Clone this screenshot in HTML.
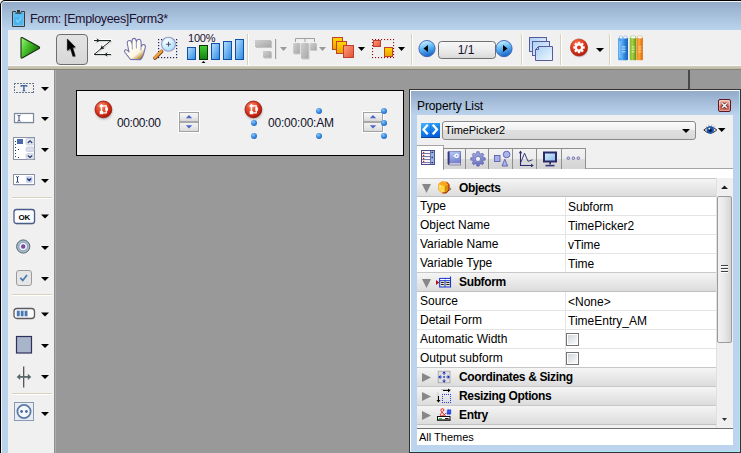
<!DOCTYPE html>
<html><head><meta charset="utf-8">
<style>
*{margin:0;padding:0;box-sizing:border-box}
html,body{width:741px;height:453px;overflow:hidden;background:#999;font-family:"Liberation Sans",sans-serif;position:relative}
.a{position:absolute}
svg{position:absolute;overflow:visible}
#wcorner{left:0;top:0;width:10px;height:10px;background:#fff}
#frame{left:0;top:0;width:741px;height:453px;background:#000;border-top-left-radius:5px}
#title{left:1px;top:1px;width:740px;height:29px;background:linear-gradient(#93abc9,#bbd4ed);border-top-left-radius:4px;border-top:1px solid #f4f6fa;border-left:1px solid #f0f4fa}
#lborder{left:1px;top:30px;width:7px;height:423px;background:#bbd2eb;border-left:1px solid #f0f4fa}
#ttext{left:30px;top:12px;font-size:12.5px;color:#1e1030;white-space:nowrap;letter-spacing:-0.35px}
#toolbar{left:8px;top:30px;width:733px;height:36px;background:#f0f0f0}
#tbline{left:8px;top:65px;width:733px;height:5px;background:linear-gradient(#f8f8f8 0,#f8f8f8 1px,#d2cdb9 1px,#bdb8a5 4px,#85837a 4px)}
#palette{left:8px;top:70px;width:46px;height:383px;background:#f0f0f0}
#palb{left:54px;top:70px;width:2px;height:383px;background:linear-gradient(90deg,#8e8e8e 50%,#adadad 50%)}
#canvas{left:56px;top:70px;width:685px;height:383px;background:#999}
#vline{left:688px;top:70px;width:2px;height:19px;background:#484848}
.sep{width:2px;height:31px;top:34px;border-left:1px solid #d6d2bd;border-right:1px solid #fff}
.hsep{left:12px;width:40px;height:2px;border-top:1px solid #d6d2bd;border-bottom:1px solid #fff}
.dd{width:0;height:0;border-left:4px solid transparent;border-right:4px solid transparent;border-top:4px solid #000}
#form{left:76px;top:90px;width:328px;height:66px;background:#f0f0f0;border:1px solid #000}
.ftxt{font-size:12px;color:#10102a;white-space:nowrap}
.handle{width:6px;height:6px;border-radius:50%;background:radial-gradient(circle at 38% 32%,#8cc8fa 0,#3a8ae0 45%,#1050b0 100%)}
#panel{left:409px;top:89px;width:332px;height:364px;background:#333}
#ptitle{left:410px;top:90px;width:330px;height:362px;border-right:1px solid #a8e8f8;border-bottom:1px solid #a8e8f8;background:linear-gradient(#93abc9 0,#bad2ec 24px,#bcd4ed);border-left:1px solid #fff;border-top:1px solid #fff}
#pttext{left:417px;top:99px;letter-spacing:-0.1px;font-size:12px;color:#000;white-space:nowrap}
#pcontent{left:417px;top:115px;width:316px;height:330px;background:#f0f0f0}
.row{left:417px;width:299px;height:19px;background:#fff;border-bottom:1px solid #e4e4e4;font-size:12px;line-height:18px;color:#000}
.row .k{position:absolute;left:3px;top:0;white-space:nowrap}
.row .v{position:absolute;left:151px;top:1px;white-space:nowrap}
.row .dv{position:absolute;left:148px;top:0;width:1px;height:18px;background:#e4e4e4}
.hdr{left:417px;width:299px;height:19px;background:linear-gradient(#f5f5f5,#dcdcdc);border-top:1px solid #c8c8c8;border-bottom:1px solid #c0c0c0;font-size:12px;line-height:18px;font-weight:bold;color:#000}
.hdr .t{position:absolute;left:42px;top:0;white-space:nowrap;letter-spacing:-0.35px}
.cb{width:13px;height:13px;border:1px solid #747474;background:linear-gradient(135deg,#cdd2da,#f6f6f6 80%);box-shadow:inset 0 0 0 1px #fff}
.tab{top:148px;height:21px;width:23px;border:1px solid #8e8e8e;border-bottom:none;background:linear-gradient(#f2f2f2,#ececec 50%,#dcdcdc 50%,#d4d4d4)}
</style></head><body>
<div id="wcorner" class="a"></div>
<div id="frame" class="a"></div>
<div id="title" class="a"></div>
<div id="lborder" class="a"></div>
<!-- clipboard icon -->
<svg style="left:12px;top:10px" width="13" height="17" viewBox="0 0 13 17">
  <rect x="1.5" y="2.5" width="10" height="13" fill="#4ab6ef"/>
  <path d="M4 1.5 H0.5 V16.5 H12.5 V1.5 H9" fill="none" stroke="#3a3a3a" stroke-width="1"/>
  <rect x="5" y="0" width="3" height="2.5" fill="#333"/>
  <rect x="3.5" y="2.5" width="6" height="1.2" fill="#333"/>
  <path d="M4 10 L6 12 L9.5 7.5" fill="none" stroke="#8fd2fa" stroke-width="1.2"/>
  <rect x="1.5" y="4" width="10" height="3" fill="#6cc6f6" opacity="0.5"/>
</svg>
<div id="ttext" class="a">Form: [Employees]Form3*</div>
<div id="toolbar" class="a"></div>
<div id="tbline" class="a"></div>
<div id="palette" class="a"></div>
<div id="palb" class="a"></div>
<div id="canvas" class="a"></div>
<div id="vline" class="a"></div>

<!-- ===== TOOLBAR ICONS ===== -->
<!-- play -->
<svg style="left:19px;top:36px" width="22" height="24" viewBox="0 0 22 24">
  <defs><linearGradient id="gplay" x1="0" y1="0" x2="1" y2="0.6"><stop offset="0" stop-color="#a0fa80"/><stop offset="0.45" stop-color="#48c02a"/><stop offset="1" stop-color="#107008"/></linearGradient></defs>
  <path d="M2 2.6 Q2 0.9 3.6 1.8 L20 10.8 Q21.2 11.7 20 12.6 L3.6 21.8 Q2 22.7 2 21 Z" fill="url(#gplay)" stroke="#1a3010" stroke-width="1.1"/>
</svg>
<!-- selected arrow button -->
<div class="a" style="left:56px;top:34px;width:32px;height:31px;border:1px solid #6f6f6f;border-radius:4px;background:linear-gradient(#e2e2e2,#dedede 50%,#d6d6d6)"></div>
<svg style="left:66px;top:38px" width="14" height="21" viewBox="0 0 14 21">
  <defs><filter id="shd" x="-50%" y="-50%" width="200%" height="200%"><feGaussianBlur stdDeviation="0.7"/></filter></defs>
  <path d="M1.3 0.9 L1.3 12.5 L4.3 10 L6.9 18.4 L9 17.6 L6.5 9.6 L9.2 9 Z" fill="#000" opacity="0.35" transform="translate(1 1.2)" filter="url(#shd)"/>
  <path d="M1.3 0.9 L1.3 12.5 L4.3 10 L6.9 18.4 L9 17.6 L6.5 9.6 L9.2 9 Z" fill="#000" stroke="#000" stroke-width="0.5" stroke-linejoin="round"/>
</svg>
<!-- Z icon -->
<svg style="left:92px;top:37px" width="22" height="23" viewBox="0 0 22 23">
  <g fill="none" stroke="#ffffff" stroke-width="3" stroke-linejoin="round" opacity="0.85">
    <path d="M2 3.5 H19 L2 17.5 H19"/>
  </g>
  <g fill="none" stroke="#c8c8c8" stroke-width="1" opacity="0.7">
    <path d="M3 4.5 H20 L3 18.5 H20"/>
  </g>
  <g fill="none" stroke="#1c2626" stroke-width="1">
    <path d="M2 3.5 H19 L2 17.5 H19"/>
  </g>
  <g fill="#1c2626">
    <path d="M4.3 1.2 L8.2 3.5 L4.3 5.8 L5.6 3.5 Z"/>
    <path d="M15.8 15.2 L11.9 17.5 L15.8 19.8 L14.5 17.5 Z"/>
    <path d="M8.1 12.4 L12.3 11.5 L11 10 L9.7 8.4 Z"/>
  </g>
</svg>
<!-- hand -->
<svg style="left:121px;top:35px" width="28" height="28" viewBox="0 0 28 28">
  <defs><linearGradient id="ghand" x1="0.25" y1="0.3" x2="0.75" y2="1"><stop offset="0" stop-color="#fffff4"/><stop offset="0.62" stop-color="#fdf8e8"/><stop offset="0.86" stop-color="#cfa860"/><stop offset="1" stop-color="#8a6020"/></linearGradient></defs>
  <path d="M9.5 24.5 L4 17.5 Q3 15.5 4.5 14.8 Q6 14.5 8 17 L6.3 8.5 Q6 5.5 8.5 5.5 Q10.6 5.5 11 8.5 L11 6.2 Q11.4 3.4 13 3.4 Q15 3.4 15.2 6.2 L15.4 6.8 Q16 4.3 17.8 4.3 Q20 4.5 20.1 7 L20.2 11.5 Q21.3 9.2 23 9.6 Q24.8 10.2 24.3 12.6 L22.6 19 Q21.6 22.6 19.5 24.6 Z" fill="url(#ghand)" stroke="#7472ac" stroke-width="1.1" stroke-linejoin="round"/>
  <path d="M11 8.5 L11.4 14.5 M15.3 7 L15.4 13.5 M20.2 11.5 L19.8 15.5" stroke="#8a86b8" stroke-width="0.9" fill="none"/>
</svg>
<!-- zoom -->
<svg style="left:153px;top:37px" width="26" height="24" viewBox="0 0 26 24">
  <defs><radialGradient id="glens" cx="0.35" cy="0.3" r="0.75"><stop offset="0" stop-color="#ffffff"/><stop offset="0.4" stop-color="#d8f4ff"/><stop offset="1" stop-color="#a8d8f8"/></radialGradient></defs>
  <g fill="#202060"><rect x="5" y="2" width="1.2" height="1.2"/><rect x="5" y="20" width="1.2" height="1.2"/><rect x="8" y="2" width="1.2" height="1.2"/><rect x="8" y="20" width="1.2" height="1.2"/><rect x="11" y="2" width="1.2" height="1.2"/><rect x="11" y="20" width="1.2" height="1.2"/><rect x="14" y="2" width="1.2" height="1.2"/><rect x="14" y="20" width="1.2" height="1.2"/><rect x="17" y="2" width="1.2" height="1.2"/><rect x="17" y="20" width="1.2" height="1.2"/><rect x="20" y="2" width="1.2" height="1.2"/><rect x="20" y="20" width="1.2" height="1.2"/><rect x="23" y="2" width="1.2" height="1.2"/><rect x="23" y="20" width="1.2" height="1.2"/><rect x="5" y="5" width="1.2" height="1.2"/><rect x="23" y="5" width="1.2" height="1.2"/><rect x="5" y="8" width="1.2" height="1.2"/><rect x="23" y="8" width="1.2" height="1.2"/><rect x="5" y="11" width="1.2" height="1.2"/><rect x="23" y="11" width="1.2" height="1.2"/><rect x="5" y="14" width="1.2" height="1.2"/><rect x="23" y="14" width="1.2" height="1.2"/><rect x="5" y="17" width="1.2" height="1.2"/><rect x="23" y="17" width="1.2" height="1.2"/></g>
  <path d="M2 21 L8.5 14.5" stroke="#704010" stroke-width="3.8" stroke-linecap="round"/>
  <path d="M1.8 20.6 L8.3 14.1" stroke="#f0a040" stroke-width="2.6" stroke-linecap="round"/>
  <circle cx="15.5" cy="7.2" r="7" fill="url(#glens)" stroke="#9898c8" stroke-width="1.1"/>
  <path d="M15.5 4.8 V9.6 M13.1 7.2 H17.9" stroke="#505070" stroke-width="1.1"/>
</svg>
<!-- 100% -->
<div class="a" style="left:188px;top:32px;font-size:11px;color:#1a1030;letter-spacing:-0.2px;white-space:nowrap">100%</div>
<svg style="left:186px;top:38px" width="60" height="27" viewBox="0 0 60 27">
  <defs>
    <linearGradient id="gbar" x1="0" y1="0" x2="1" y2="1"><stop offset="0" stop-color="#b8e0ff"/><stop offset="1" stop-color="#2a8ae0"/></linearGradient>
    <linearGradient id="ggrn" x1="0" y1="0" x2="0" y2="1"><stop offset="0" stop-color="#40d030"/><stop offset="1" stop-color="#108010"/></linearGradient>
  </defs>
  <rect x="1.5" y="9.5" width="8" height="12" fill="url(#gbar)" stroke="#1050a8" stroke-width="1"/>
  <rect x="13.5" y="7.5" width="8" height="14" fill="url(#ggrn)" stroke="#103010" stroke-width="1"/>
  <rect x="25.5" y="5.5" width="8" height="16" fill="url(#gbar)" stroke="#1050a8" stroke-width="1"/>
  <rect x="37.5" y="3.5" width="8" height="18" fill="url(#gbar)" stroke="#1050a8" stroke-width="1"/>
  <rect x="49.5" y="1.5" width="8" height="20" fill="url(#gbar)" stroke="#1050a8" stroke-width="1"/>
  <path d="M15.5 25 L17.5 23 L19.5 25 Z" fill="#000"/>
</svg>
<div class="a sep" style="left:247px"></div>
<!-- align (disabled) -->
<svg style="left:254px;top:38px" width="36" height="22" viewBox="0 0 36 22">
  <defs><linearGradient id="gdis" x1="0" y1="0" x2="1" y2="1"><stop offset="0" stop-color="#d0d0d0"/><stop offset="1" stop-color="#a8a8a8"/></linearGradient>
  <filter id="dshd" x="-30%" y="-30%" width="160%" height="160%"><feGaussianBlur stdDeviation="0.6"/></filter></defs>
  <rect x="2" y="3" width="16" height="7" fill="#000" opacity="0.18" filter="url(#dshd)"/>
  <rect x="10" y="14" width="8" height="6.5" fill="#000" opacity="0.18" filter="url(#dshd)"/>
  <rect x="1" y="2" width="16" height="7" fill="url(#gdis)"/>
  <rect x="9" y="13" width="8" height="6.5" fill="url(#gdis)"/>
  <rect x="21" y="1" width="1.2" height="20" fill="#a0a0a0"/>
  <path d="M26 9 L33 9 L29.5 13 Z" fill="#9a9a9a"/>
</svg>
<svg style="left:292px;top:37px" width="36" height="23" viewBox="0 0 36 23">
  <path d="M3.5 5 V1.5 H22.5 V5 M13 1.5 V5" fill="none" stroke="#a0a0a0" stroke-width="1"/>
  <rect x="2" y="7" width="6.5" height="10.5" fill="#000" opacity="0.15" filter="url(#dshd)"/>
  <rect x="10" y="7" width="7.5" height="15.5" fill="#000" opacity="0.15" filter="url(#dshd)"/>
  <rect x="18.5" y="7" width="6.5" height="7" fill="#000" opacity="0.15" filter="url(#dshd)"/>
  <rect x="1.2" y="6" width="6.5" height="10.5" fill="url(#gdis)"/>
  <rect x="9" y="6" width="7.5" height="15.5" fill="url(#gdis)"/>
  <rect x="18" y="6" width="6.5" height="7" fill="url(#gdis)"/>
  <path d="M27 10 L34 10 L30.5 14 Z" fill="#9a9a9a"/>
</svg>
<!-- stacked squares -->
<svg style="left:331px;top:36px" width="36" height="23" viewBox="0 0 36 23">
  <defs>
    <linearGradient id="gy" x1="0" y1="0" x2="0" y2="1"><stop offset="0" stop-color="#ffd800"/><stop offset="1" stop-color="#e8a000"/></linearGradient>
    <linearGradient id="gr" x1="0" y1="0" x2="1" y2="1"><stop offset="0" stop-color="#ffa080"/><stop offset="1" stop-color="#e05030"/></linearGradient>
  </defs>
  <rect x="1.5" y="1.5" width="10" height="12" fill="url(#gy)" stroke="#c04030" stroke-width="1"/>
  <rect x="5.5" y="5.5" width="10" height="12" fill="url(#gy)" stroke="#c04030" stroke-width="1"/>
  <rect x="12.5" y="9.5" width="10" height="12" fill="url(#gr)" stroke="#c04030" stroke-width="1"/>
  <path d="M27 11 L34 11 L30.5 15 Z" fill="#000"/>
</svg>
<!-- dotted arrange -->
<svg style="left:371px;top:38px" width="36" height="21" viewBox="0 0 36 21">
  <g fill="#980808"><rect x="1" y="1" width="1.1" height="1.1"/><rect x="1" y="4" width="1.1" height="1.1"/><rect x="1" y="7" width="1.1" height="1.1"/><rect x="1" y="10" width="1.1" height="1.1"/><rect x="1" y="13" width="1.1" height="1.1"/><rect x="1" y="16" width="1.1" height="1.1"/><rect x="1" y="19" width="1.1" height="1.1"/><rect x="4" y="1" width="1.1" height="1.1"/><rect x="4" y="19" width="1.1" height="1.1"/><rect x="7" y="1" width="1.1" height="1.1"/><rect x="7" y="19" width="1.1" height="1.1"/><rect x="10" y="1" width="1.1" height="1.1"/><rect x="10" y="19" width="1.1" height="1.1"/><rect x="13" y="1" width="1.1" height="1.1"/><rect x="13" y="19" width="1.1" height="1.1"/><rect x="16" y="1" width="1.1" height="1.1"/><rect x="16" y="19" width="1.1" height="1.1"/><rect x="19" y="1" width="1.1" height="1.1"/><rect x="19" y="19" width="1.1" height="1.1"/><rect x="22" y="1" width="1.1" height="1.1"/><rect x="22" y="4" width="1.1" height="1.1"/><rect x="22" y="7" width="1.1" height="1.1"/><rect x="22" y="10" width="1.1" height="1.1"/><rect x="22" y="13" width="1.1" height="1.1"/><rect x="22" y="16" width="1.1" height="1.1"/><rect x="22" y="19" width="1.1" height="1.1"/></g>
  <rect x="2.5" y="2.5" width="7" height="6" fill="url(#gr)" stroke="#c04030" stroke-width="1"/>
  <rect x="13.5" y="9.5" width="8" height="9" fill="url(#gy)" stroke="#c04030" stroke-width="1"/>
  <path d="M27 9 L34 9 L30.5 13 Z" fill="#000"/>
</svg>
<div class="a sep" style="left:411px"></div>
<!-- nav -->
<svg style="left:418px;top:40px" width="96" height="19" viewBox="0 0 96 19">
  <defs>
    <linearGradient id="gcirc" x1="0.3" y1="0" x2="0.6" y2="1"><stop offset="0" stop-color="#d8f6ff"/><stop offset="0.45" stop-color="#60b8f4"/><stop offset="1" stop-color="#1460c4"/></linearGradient>
    <linearGradient id="gbox" x1="0" y1="0" x2="0" y2="1"><stop offset="0" stop-color="#f8f8f8"/><stop offset="0.5" stop-color="#ececec"/><stop offset="1" stop-color="#d8d8d8"/></linearGradient>
  </defs>
  <circle cx="9" cy="8.6" r="8.1" fill="url(#gcirc)" stroke="#3a5cb0" stroke-width="0.9"/>
  <path d="M5.5 8.5 L10 5 L10 12 Z" fill="#000"/>
  <rect x="20.5" y="1.5" width="57" height="17" rx="3" fill="url(#gbox)" stroke="#707070" stroke-width="1"/>
  <circle cx="86" cy="8.6" r="8.1" fill="url(#gcirc)" stroke="#3a5cb0" stroke-width="0.9"/>
  <path d="M89.5 8.5 L85 5 L85 12 Z" fill="#000"/>
</svg>
<div class="a" style="left:456px;top:43px;width:20px;text-align:center;font-size:12px;color:#1a1030">1/1</div>
<div class="a sep" style="left:521px"></div>
<!-- windows icon -->
<svg style="left:528px;top:36px" width="26" height="26" viewBox="0 0 26 26">
  <defs><linearGradient id="gwin" x1="0" y1="0" x2="1" y2="1"><stop offset="0" stop-color="#a8d0f4"/><stop offset="1" stop-color="#f0f8ff"/></linearGradient></defs>
  <rect x="1.5" y="1.5" width="17" height="14" fill="url(#gwin)" stroke="#5a5a9a" stroke-width="1"/>
  <rect x="4.5" y="5.5" width="17" height="14" fill="url(#gwin)" stroke="#5a5a9a" stroke-width="1"/>
  <path d="M10.5 10.5 H24.5 V24.5 H7.5 V13.5 Z" fill="url(#gwin)" stroke="#5a5a9a" stroke-width="1"/>
  <path d="M7.5 13.5 H10.5 V10.5" fill="none" stroke="#5a5a9a" stroke-width="1"/>
</svg>
<div class="a sep" style="left:560px"></div>
<!-- red gear -->
<svg style="left:569px;top:38px" width="20" height="20" viewBox="0 0 20 20">
  <defs><radialGradient id="gred" cx="0.4" cy="0.3" r="0.8"><stop offset="0" stop-color="#ff7a50"/><stop offset="0.5" stop-color="#e03818"/><stop offset="1" stop-color="#a01006"/></radialGradient></defs>
  <ellipse cx="10.5" cy="11" rx="8.8" ry="8.5" fill="#000" opacity="0.15"/>
  <circle cx="10" cy="9.5" r="8.6" fill="url(#gred)" stroke="#a01808" stroke-width="0.5"/>
  <g fill="#fff">
    <circle cx="10" cy="9.5" r="4.2"/>
    <rect x="8.8" y="3.8" width="2.4" height="11.4"/>
    <rect x="4.3" y="8.3" width="11.4" height="2.4"/>
    <rect x="8.8" y="3.8" width="2.4" height="11.4" transform="rotate(45 10 9.5)"/>
    <rect x="8.8" y="3.8" width="2.4" height="11.4" transform="rotate(-45 10 9.5)"/>
  </g>
  <circle cx="10" cy="9.5" r="2" fill="#e03018"/>
</svg>
<div class="a dd" style="left:596px;top:48px"></div>
<div class="a sep" style="left:609px"></div>
<!-- books -->
<svg style="left:617px;top:35px" width="28" height="27" viewBox="0 0 28 27">
  <defs>
    <linearGradient id="gb1" x1="0" y1="0" x2="1" y2="0"><stop offset="0" stop-color="#3a90e8"/><stop offset="0.35" stop-color="#5ab0f8"/><stop offset="0.7" stop-color="#2a80d8"/><stop offset="1" stop-color="#1a60b8"/></linearGradient>
    <linearGradient id="gb2" x1="0" y1="0" x2="1" y2="0"><stop offset="0" stop-color="#80b828"/><stop offset="0.4" stop-color="#a8d048"/><stop offset="1" stop-color="#5a9010"/></linearGradient>
    <linearGradient id="gb3" x1="0" y1="0" x2="1" y2="0"><stop offset="0" stop-color="#f08010"/><stop offset="0.4" stop-color="#ffa838"/><stop offset="1" stop-color="#d86000"/></linearGradient>
  </defs>
  <path d="M1.2 4 Q1.2 2.5 2.5 2.5 H9.8 Q11 2.5 11 4 V24 Q11 25.2 9.8 25.2 H2.5 Q1.2 25.2 1.2 24 Z" fill="url(#gb1)"/>
  <rect x="12.8" y="2.5" width="6.5" height="22.7" rx="0.8" fill="url(#gb2)"/>
  <rect x="19.6" y="2.5" width="6.2" height="22.7" rx="0.8" fill="url(#gb3)"/>
  <path d="M2.5 1 H5 V2.5 H7 V1 H9.8 V3.5 H2.5 Z" fill="#fff" stroke="#7aa8d8" stroke-width="0.5"/>
  <path d="M13.8 1 H18.5 V3.5 H13.8 Z" fill="#fff" stroke="#90b860" stroke-width="0.5"/>
  <path d="M20.5 1 H25 V3.5 H20.5 Z" fill="#fff" stroke="#e0a060" stroke-width="0.5"/>
  <rect x="2" y="6" width="1.5" height="17" fill="#a8d8ff" opacity="0.6"/>
  <g fill="#d8ecff" opacity="0.6"><rect x="5" y="11" width="3.5" height="1.5"/><rect x="5" y="13.5" width="3.5" height="1.5"/><rect x="5" y="16" width="3.5" height="1.5"/></g>
  <g fill="#eaffc8" opacity="0.55"><rect x="14.8" y="11" width="2.8" height="1.5"/><rect x="14.8" y="13.5" width="2.8" height="1.5"/><rect x="14.8" y="16" width="2.8" height="1.5"/></g>
  <g fill="#ffe8c0" opacity="0.55"><rect x="21.5" y="11" width="2.8" height="1.5"/><rect x="21.5" y="13.5" width="2.8" height="1.5"/><rect x="21.5" y="16" width="2.8" height="1.5"/></g>
</svg>

<!-- ===== PALETTE ===== -->
<svg style="left:13px;top:81px" width="40" height="345" viewBox="0 0 40 345">
  <!-- text label dashed T -->
  <g fill="#6a7890"><rect x="1" y="2" width="2" height="1"/><rect x="4" y="2" width="2" height="1"/><rect x="7" y="2" width="2" height="1"/><rect x="10" y="2" width="2" height="1"/><rect x="13" y="2" width="2" height="1"/><rect x="16" y="2" width="2" height="1"/><rect x="19" y="2" width="2" height="1"/><rect x="3" y="11" width="2" height="1"/><rect x="6" y="11" width="2" height="1"/><rect x="9" y="11" width="2" height="1"/><rect x="12" y="11" width="2" height="1"/><rect x="15" y="11" width="2" height="1"/><rect x="18" y="11" width="2" height="1"/><rect x="1" y="11" width="1" height="1"/><rect x="1" y="2" width="1" height="2"/><rect x="1" y="5" width="1" height="2"/><rect x="1" y="8" width="1" height="2"/><rect x="20" y="4" width="1" height="2"/><rect x="20" y="7" width="1" height="2"/><rect x="20" y="10" width="1" height="2"/></g>
  <path d="M8 4.7 H13.8" stroke="#3a5a98" stroke-width="1.3"/>
  <path d="M8 4.2 V6 M13.8 4.2 V6" stroke="#3a5a98" stroke-width="0.9"/>
  <path d="M10.9 5 V9.8" stroke="#3a5a98" stroke-width="1.4"/>
  <path d="M9.6 9.8 H12.2" stroke="#3a5a98" stroke-width="1"/>
  <path d="M28 6 L36 6 L32 10 Z" fill="#000"/>
  <!-- input -->
  <rect x="1.5" y="33.5" width="19.5" height="9" fill="#000" opacity="0.15"/>
  <rect x="1.5" y="32.5" width="19" height="9" fill="#fff" stroke="#7a8898" stroke-width="1.2"/>
  <path d="M4.5 34.2 Q6 34.2 6 35.5 V38.8 Q6 40.2 4.5 40.2 M7.5 34.2 Q6 34.2 6 35.5 M7.5 40.2 Q6 40.2 6 38.8" stroke="#3a4a90" stroke-width="1" fill="none"/>
  <path d="M28 36 L36 36 L32 40 Z" fill="#000"/>
  <!-- list -->
  <rect x="1" y="57" width="21" height="22" fill="#9aa0b0" opacity="0.35"/>
  <rect x="0.5" y="56.5" width="21" height="22" fill="#fff" stroke="#8a90a8" stroke-width="1"/>
  <rect x="4" y="58" width="6" height="5" fill="#4a6aa8"/>
  <g fill="#3a3a50"><rect x="2" y="60" width="1" height="1"/><rect x="2" y="63" width="1" height="1"/><rect x="2" y="66" width="1" height="1"/><rect x="2" y="69" width="1" height="1"/><rect x="2" y="72" width="1" height="1"/><rect x="2" y="75" width="1" height="1"/><rect x="5" y="68" width="1" height="1"/><rect x="5" y="76" width="1" height="1"/></g>
  <rect x="13" y="57.5" width="8" height="6.5" rx="1.5" fill="#e2e6f0" stroke="#c4cad8" stroke-width="0.8"/>
  <rect x="13" y="66" width="8" height="4.5" rx="1.5" fill="#d8dcec" stroke="#c4cad8" stroke-width="0.8"/>
  <rect x="13" y="72.5" width="8" height="5.5" rx="1.5" fill="#e2e6f0" stroke="#c4cad8" stroke-width="0.8"/>
  <path d="M14.8 62 L17 59.8 L19.2 62" stroke="#2a3a70" stroke-width="1.2" fill="none"/>
  <path d="M14.8 74.5 L17 76.5 L19.2 74.5" stroke="#2a3a70" stroke-width="1.2" fill="none"/>
  <path d="M28 67 L36 67 L32 71 Z" fill="#000"/>
  <!-- combo -->
  <rect x="1" y="94" width="20" height="11" fill="#9aa0b0" opacity="0.3"/>
  <rect x="0.5" y="93.5" width="21" height="10" fill="#fff" stroke="#8a90a8" stroke-width="1"/>
  <path d="M3.2 95.5 Q4.5 95.5 4.5 97 V100 Q4.5 101.5 3.2 101.5 M5.8 95.5 Q4.5 95.5 4.5 97 M5.8 101.5 Q4.5 101.5 4.5 100" stroke="#203070" stroke-width="0.9" fill="none"/>
  <rect x="13" y="95.2" width="6.5" height="6.5" rx="1" fill="#c4d0ec"/>
  <path d="M14.3 97.5 L16.25 99.5 L18.2 97.5" stroke="#203070" stroke-width="1.3" fill="none"/>
  <path d="M28 98 L36 98 L32 102 Z" fill="#000"/>
  <!-- OK button -->
  <rect x="1.8" y="129.5" width="20.5" height="14" rx="2.5" fill="#000" opacity="0.12"/>
  <rect x="1" y="128.5" width="20.5" height="14" rx="2.5" fill="#fdfdff" stroke="#4a5c88" stroke-width="1.3"/>
  <text x="11.2" y="138.8" font-size="8" font-weight="bold" text-anchor="middle" fill="#000" font-family="Liberation Sans" letter-spacing="-0.3">OK</text>
  <path d="M28 133.5 L36 133.5 L32 137.5 Z" fill="#000"/>
  <!-- radio -->
  <circle cx="10.2" cy="165.5" r="6.6" fill="#a8bccc" stroke="#4a5a6a" stroke-width="0.9"/>
  <circle cx="10.2" cy="165.5" r="4.3" fill="#eef2f8" stroke="#7a90a8" stroke-width="0.8"/>
  <circle cx="10.2" cy="165.5" r="2.2" fill="#7a4a98"/>
  <path d="M28 165 L36 165 L32 169 Z" fill="#000"/>
  <!-- checkbox -->
  <rect x="3.5" y="189.5" width="15" height="15" rx="2.5" fill="#e6e6e6" stroke="#9a9a9a" stroke-width="1"/>
  <path d="M7.3 196.8 L9.8 199.4 L14 194" stroke="#4a78b4" stroke-width="1.7" fill="none"/>
  <path d="M28 196 L36 196 L32 200 Z" fill="#000"/>
  <!-- progress -->
  <rect x="1" y="227.5" width="20.5" height="10" rx="3" fill="#fbfbfb" stroke="#5a5a60" stroke-width="1.3"/>
  <rect x="3.8" y="229.7" width="2.9" height="5.6" fill="#4a78b4"/>
  <rect x="7.7" y="229.7" width="2.9" height="5.6" fill="#4a78b4"/>
  <rect x="11.6" y="229.7" width="2.9" height="5.6" fill="#4a78b4"/>
  <path d="M28 231.5 L36 231.5 L32 235.5 Z" fill="#000"/>
  <!-- rectangle -->
  <rect x="3.5" y="255.5" width="15" height="16.5" fill="#a8b4c8" stroke="#303060" stroke-width="1.2"/>
  <path d="M28 263 L36 263 L32 267 Z" fill="#000"/>
  <!-- splitter -->
  <path d="M10.7 285.5 V306.5" stroke="#484848" stroke-width="1.2"/>
  <path d="M6.5 295 H15.5 V296.8 H6.5 Z" fill="#5a6a6a"/>
  <path d="M3.7 295.9 L7.2 292.8 V299 Z M18.3 295.9 L14.8 292.8 V299 Z" fill="#5a6a6a"/>
  <path d="M28 294 L36 294 L32 298 Z" fill="#000"/>
  <!-- plugin -->
  <rect x="2" y="322" width="19" height="18" fill="#000" opacity="0.15"/>
  <rect x="1.5" y="321.5" width="19" height="18" fill="#e8ecf4" stroke="#8a98b0" stroke-width="1"/>
  <circle cx="11" cy="330.5" r="6.6" fill="#f4f6fa" stroke="#5a7aa8" stroke-width="1.8"/>
  <circle cx="8.6" cy="330.5" r="1.4" fill="#4a6a98"/>
  <circle cx="13.4" cy="330.5" r="1.4" fill="#4a6a98"/>
  <path d="M28 331 L36 331 L32 335 Z" fill="#000"/>
</svg>
<div class="a hsep" style="top:197px"></div>
<div class="a hsep" style="top:294px"></div>
<div class="a hsep" style="top:393px"></div>

<!-- ===== FORM ===== -->
<div id="form" class="a"></div>
<svg style="left:94px;top:100px" width="19" height="19" viewBox="0 0 19 19">
  <defs><radialGradient id="gred2" cx="0.4" cy="0.35" r="0.75"><stop offset="0" stop-color="#f87a58"/><stop offset="0.55" stop-color="#d8341a"/><stop offset="1" stop-color="#980c04"/></radialGradient><filter id="rshd" x="-30%" y="-30%" width="160%" height="160%"><feGaussianBlur stdDeviation="0.9"/></filter></defs>
  <ellipse cx="9.8" cy="11.2" rx="8.6" ry="8.4" fill="#000" opacity="0.22" filter="url(#rshd)"/>
  <circle cx="9.4" cy="9.4" r="8.4" fill="url(#gred2)" stroke="#8a0c04" stroke-width="0.7"/>
  <ellipse cx="8.2" cy="5.5" rx="5" ry="3" fill="#fff" opacity="0.12"/>
  <g fill="#fff">
    <path d="M7.4 3.8 L9.6 6 L7.4 8.2 L5.2 6 Z"/>
    <rect x="6.7" y="7.6" width="1.5" height="4"/>
    <rect x="5.7" y="11" width="3.4" height="3.2"/>
    <rect x="11.3" y="7.4" width="2.6" height="3.4"/>
  </g>
  <path d="M9 5.9 H12.3 V12.9 H9" stroke="#fff" stroke-width="1.2" fill="none"/>
</svg>
<div class="a ftxt" style="left:117px;top:116px;letter-spacing:-0.4px">00:00:00</div>
<!-- spinner 1 -->
<div class="a" style="left:178px;top:111px;width:22px;height:22px;background:#fff"></div>
<div class="a" style="left:179px;top:112px;width:20px;height:20px;border:1px solid #a2a2a2;background:#a8a8a8"></div>
<div class="a" style="left:180px;top:113px;width:18px;height:8px;background:linear-gradient(#f6f6f6,#e8e8e8 60%,#d8d8d8)"></div>
<div class="a" style="left:180px;top:123px;width:18px;height:8px;background:linear-gradient(#f2f2f2,#e6e6e6 60%,#dadada)"></div>
<svg style="left:185px;top:114px" width="8" height="16" viewBox="0 0 8 16"><path d="M0.8 4.2 L4 1 L7.2 4.2 Z M0.8 11.2 L4 14.4 L7.2 11.2 Z" fill="#4a64c8"/></svg>
<div class="handle a" style="left:251px;top:108px"></div>
<svg style="left:244px;top:100px" width="19" height="19" viewBox="0 0 19 19">
  <ellipse cx="9.8" cy="11.2" rx="8.6" ry="8.4" fill="#000" opacity="0.22" filter="url(#rshd)"/>
  <circle cx="9.4" cy="9.4" r="8.4" fill="url(#gred2)" stroke="#8a0c04" stroke-width="0.7"/>
  <ellipse cx="8.2" cy="5.5" rx="5" ry="3" fill="#fff" opacity="0.12"/>
  <g fill="#fff">
    <path d="M7.4 3.8 L9.6 6 L7.4 8.2 L5.2 6 Z"/>
    <rect x="6.7" y="7.6" width="1.5" height="4"/>
    <rect x="5.7" y="11" width="3.4" height="3.2"/>
    <rect x="11.3" y="7.4" width="2.6" height="3.4"/>
  </g>
  <path d="M9 5.9 H12.3 V12.9 H9" stroke="#fff" stroke-width="1.2" fill="none"/>
</svg>
<div class="a ftxt" style="left:268px;top:116px;letter-spacing:-0.2px">00:00:00:AM</div>
<div class="a" style="left:362px;top:111px;width:22px;height:22px;background:#fff"></div>
<div class="a" style="left:363px;top:112px;width:20px;height:20px;border:1px solid #a2a2a2;background:#a8a8a8"></div>
<div class="a" style="left:364px;top:113px;width:18px;height:8px;background:linear-gradient(#f6f6f6,#e8e8e8 60%,#d8d8d8)"></div>
<div class="a" style="left:364px;top:123px;width:18px;height:8px;background:linear-gradient(#f2f2f2,#e6e6e6 60%,#dadada)"></div>
<svg style="left:369px;top:114px" width="8" height="16" viewBox="0 0 8 16"><path d="M0.8 4.2 L4 1 L7.2 4.2 Z M0.8 11.2 L4 14.4 L7.2 11.2 Z" fill="#4a64c8"/></svg>
<div class="handle a" style="left:251px;top:120px"></div>
<div class="handle a" style="left:251px;top:133px"></div>
<div class="handle a" style="left:316px;top:108px"></div>
<div class="handle a" style="left:316px;top:133px"></div>
<div class="handle a" style="left:381px;top:108px"></div>
<div class="handle a" style="left:381px;top:120px"></div>
<div class="handle a" style="left:381px;top:133px"></div>

<!-- ===== PROPERTY PANEL ===== -->
<div id="panel" class="a"></div>
<div id="ptitle" class="a"></div>
<div id="pttext" class="a">Property List</div>
<div class="a" style="left:718px;top:99px;width:13px;height:13px;border:1px solid #581828;border-radius:2px;background:linear-gradient(#f0b8a8,#e09080 45%,#c85a48 55%,#d07060);box-shadow:inset 0 0 0 1px rgba(255,255,255,0.35)"></div>
<svg style="left:718px;top:99px" width="13" height="13" viewBox="0 0 13 13"><path d="M4.2 4.2 L8.8 8.8 M8.8 4.2 L4.2 8.8" stroke="#4a2030" stroke-width="2.8"/><path d="M4.2 4.2 L8.8 8.8 M8.8 4.2 L4.2 8.8" stroke="#fff" stroke-width="1.5"/></svg>
<div id="pcontent" class="a"></div>
<!-- <> icon -->
<svg style="left:421px;top:123px" width="19" height="15" viewBox="0 0 19 15">
  <defs><linearGradient id="gbl" x1="0" y1="0" x2="0.4" y2="1"><stop offset="0" stop-color="#48b4ff"/><stop offset="0.5" stop-color="#1888f0"/><stop offset="1" stop-color="#0860d8"/></linearGradient></defs>
  <rect x="0" y="0" width="19" height="15" fill="url(#gbl)"/>
  <rect x="9" y="0" width="0.6" height="15" fill="#0a58c0" opacity="0.6"/>
  <rect x="0" y="14.2" width="19" height="0.8" fill="#0a3a90"/>
  <path d="M6 2.5 L2.5 6.5 L6 10.5 M12.5 2.5 L16 6.5 L12.5 10.5" stroke="#fff" stroke-width="2.3" fill="none" stroke-linecap="square"/>
</svg>
<!-- dropdown -->
<div class="a" style="left:442px;top:121px;width:254px;height:19px;border:1px solid #8a8a8a;border-radius:3px;background:linear-gradient(#fbfbfb,#f0f0f0 45%,#e0e0e0 50%,#d8d8d8)"></div>
<div class="a" style="left:445px;top:124px;font-size:11px;color:#000;white-space:nowrap;letter-spacing:-0.05px">TimePicker2</div>
<div class="a dd" style="left:682px;top:129px"></div>
<!-- eye -->
<svg style="left:703px;top:123px" width="24" height="14" viewBox="0 0 24 14">
  <path d="M0.8 7 Q7.3 0.6 13.8 7 Q7.3 13.4 0.8 7 Z" fill="#e8dcc0" stroke="#303038" stroke-width="1"/>
  <path d="M3 3 L4 4.5 M5.5 1.6 L6.2 3.6 M9 1.6 L8.4 3.6 M11.6 3 L10.6 4.5" stroke="#8a8a98" stroke-width="0.6"/>
  <circle cx="7.3" cy="7" r="3.7" fill="#1a58b8"/>
  <circle cx="7.3" cy="7.3" r="1.6" fill="#061840"/>
  <circle cx="6.3" cy="5.6" r="0.9" fill="#fff"/>
  <path d="M15 5 L22.5 5 L18.75 9 Z" fill="#000"/>
</svg>
<!-- tabs -->
<div class="a" style="left:417px;top:169px;width:316px;height:9px;background:#fff"></div>
<div class="a" style="left:443px;top:168px;width:290px;height:1px;background:#a5a5a5"></div>
<div class="a" style="left:417px;top:145px;width:27px;height:25px;border:1px solid #a5a5a5;border-bottom:none;border-left:none;background:#fff"></div>
<div class="a tab" style="left:443px;width:23px"></div>
<div class="a tab" style="left:465px;width:24px"></div>
<div class="a tab" style="left:488px;width:25px"></div>
<div class="a tab" style="left:512px;width:25px"></div>
<div class="a tab" style="left:536px;width:26px"></div>
<div class="a tab" style="left:561px;width:25px"></div>
<svg style="left:420px;top:149px" width="170" height="18" viewBox="0 0 170 18">
  <!-- list icon -->
  <rect x="1.5" y="1.5" width="13" height="14" fill="#fff" stroke="#4a4a8a" stroke-width="1"/>
  <g stroke="#5a5a98" stroke-width="0.9"><path d="M2 4.6 H10.5 M2 7.6 H10.5 M2 10.6 H10.5 M2 13.6 H10.5"/></g>
  <g fill="#f8f8ff"><rect x="2.2" y="2.2" width="8" height="1.8"/></g>
  <g fill="#d01818"><circle cx="3.6" cy="3.4" r="0.75"/><circle cx="3.6" cy="6.4" r="0.75"/><circle cx="3.6" cy="9.4" r="0.75"/><circle cx="3.6" cy="12.4" r="0.75"/></g>
  <rect x="10.5" y="2" width="3.6" height="13" fill="#9ab4e4"/>
  <path d="M10.5 2 V15" stroke="#5a5a98" stroke-width="0.8"/>
  <path d="M11 4 L12.3 2.4 L13.6 4 Z M11 13 L12.3 14.6 L13.6 13 Z" fill="#2a2a70"/>
  <circle cx="12.3" cy="8.4" r="0.9" fill="#2a4a90"/>
  <!-- book -->
  <defs><linearGradient id="gbook" x1="0" y1="0" x2="0.3" y2="1"><stop offset="0" stop-color="#b4ccf6"/><stop offset="1" stop-color="#7a84d0"/></linearGradient></defs>
  <path d="M28.8 2.3 H40.2 Q41 2.3 41 3.1 V16.3 H29.8 Q27.6 16.3 27.6 14.3 V3.5 Q27.6 2.3 28.8 2.3 Z" fill="#3a3a7a"/>
  <path d="M29.6 2.6 H40.1 Q40.6 2.6 40.6 3.2 V13.9 H29.6 Z" fill="url(#gbook)"/>
  <rect x="29.4" y="14.3" width="11.2" height="1.3" fill="#fff"/>
  <circle cx="36.6" cy="6.8" r="1.7" fill="none" stroke="#fff" stroke-width="1.3"/>
  <path d="M33.4 6.8 H34.8" stroke="#fff" stroke-width="1.2"/>
  <!-- gear -->
  <defs><linearGradient id="ggear" x1="0" y1="0" x2="0.3" y2="1"><stop offset="0" stop-color="#a8b0e8"/><stop offset="1" stop-color="#6a72c0"/></linearGradient></defs>
  <path d="M63.47 8.68 L65.19 8.66 L65.19 11.14 L63.47 11.12 L62.73 12.90 L63.96 14.11 L62.21 15.86 L61.00 14.63 L59.22 15.37 L59.24 17.09 L56.76 17.09 L56.78 15.37 L55.00 14.63 L53.79 15.86 L52.04 14.11 L53.27 12.90 L52.53 11.12 L50.81 11.14 L50.81 8.66 L52.53 8.68 L53.27 6.90 L52.04 5.69 L53.79 3.94 L55.00 5.17 L56.78 4.43 L56.76 2.71 L59.24 2.71 L59.22 4.43 L61.00 5.17 L62.21 3.94 L63.96 5.69 L62.73 6.90 Z" fill="url(#ggear)" stroke="#5a60a8" stroke-width="0.7" stroke-linejoin="round"/>
  <circle cx="58" cy="9.9" r="2.6" fill="#eceef8" stroke="#5a60a8" stroke-width="0.7"/>
  <!-- shapes -->
  <rect x="74.5" y="6.5" width="5.5" height="6" fill="#a8b0e8" stroke="#5a60b0" stroke-width="0.9"/>
  <circle cx="86.6" cy="5.5" r="3.3" fill="#a8b4ec" stroke="#5a60b0" stroke-width="0.9"/>
  <path d="M82 17 L84.8 10.2 L87.6 17 Z" fill="#a8b4ec" stroke="#5a60b0" stroke-width="0.9" stroke-linejoin="round"/>
  <!-- graph -->
  <path d="M100.5 2.5 V16.5 H113" stroke="#2a2a70" stroke-width="1.1" fill="none"/>
  <path d="M98.8 4.2 L100.5 1.5 L102.2 4.2 Z M111 14.8 L113.8 16.5 L111 18.2 Z" fill="#2a2a70"/>
  <path d="M101 13 L104.5 4.2 L108 12.3 L112.5 10.8" stroke="#2a2a70" stroke-width="0.9" fill="none"/>
  <!-- monitor -->
  <defs><linearGradient id="gscr" x1="0" y1="0" x2="1" y2="1"><stop offset="0" stop-color="#d8f0ff"/><stop offset="1" stop-color="#88b8e8"/></linearGradient></defs>
  <rect x="124" y="3.5" width="12" height="9" fill="url(#gscr)" stroke="#2a2a6a" stroke-width="2"/>
  <rect x="129.3" y="13" width="1.6" height="2.5" fill="#2a2a6a"/>
  <rect x="125.5" y="15.8" width="9" height="1.6" fill="#3a3a7a"/>
  <!-- dots -->
  <g fill="#d0d0ec" stroke="#6a6aa8" stroke-width="0.9"><circle cx="148.3" cy="9.2" r="1.3"/><circle cx="153.4" cy="9.2" r="1.3"/><circle cx="158.3" cy="9.2" r="1.3"/></g>
</svg>

<!-- grid -->
<div class="a hdr" style="top:178px"><span class="t">Objects</span></div>
<div class="a row" style="top:197px"><span class="k">Type</span><span class="dv"></span><span class="v">Subform</span></div>
<div class="a row" style="top:216px"><span class="k">Object Name</span><span class="dv"></span><span class="v">TimePicker2</span></div>
<div class="a row" style="top:235px"><span class="k">Variable Name</span><span class="dv"></span><span class="v">vTime</span></div>
<div class="a row" style="top:254px"><span class="k">Variable Type</span><span class="dv"></span><span class="v">Time</span></div>
<div class="a hdr" style="top:272px;height:20px"><span class="t">Subform</span></div>
<div class="a row" style="top:292px"><span class="k">Source</span><span class="dv"></span><span class="v">&lt;None&gt;</span></div>
<div class="a row" style="top:311px"><span class="k">Detail Form</span><span class="dv"></span><span class="v">TimeEntry_AM</span></div>
<div class="a row" style="top:330px"><span class="k">Automatic Width</span><span class="dv"></span></div>
<div class="a row" style="top:349px"><span class="k">Output subform</span><span class="dv"></span></div>
<div class="a cb" style="left:566px;top:333px"></div>
<div class="a cb" style="left:566px;top:352px"></div>
<div class="a hdr" style="top:367px;height:20px"><span class="t">Coordinates &amp; Sizing</span></div>
<div class="a hdr" style="top:386px;height:20px"><span class="t">Resizing Options</span></div>
<div class="a hdr" style="top:405px;height:20px"><span class="t">Entry</span></div>
<!-- header icons -->
<svg style="left:417px;top:178px" width="40" height="247" viewBox="0 0 40 247">
  <!-- triangles down -->
  <path d="M5 6 L14 6 L9.5 15 Z" fill="#878787"/>
  <path d="M5 101 L14 101 L9.5 110 Z" fill="#878787"/>
  <!-- triangles right -->
  <path d="M5 195 L5 204 L14 199.5 Z" fill="#878787"/>
  <path d="M5 214 L5 223 L14 218.5 Z" fill="#878787"/>
  <path d="M5 233 L5 242 L14 237.5 Z" fill="#878787"/>
  <!-- cube -->
  <path d="M32.5 9 L34.5 11 L32.5 13 Z" fill="#607080" opacity="0.8"/>
  <path d="M21.5 6 L25 3.5 L29.5 4 L32 6.5 V12 L29.5 14.8 L25 15 L21.5 12 Z" fill="#f8c030" stroke="#e8a020" stroke-width="0.6"/>
  <path d="M21.8 6 L25 3.6 L29.5 4.2 L31.8 6.6 L27.5 8.2 Z" fill="#ffa41c"/>
  <path d="M27.5 8.2 L31.8 6.6 V12 L29.5 14.6 L27.5 14.8 Z" fill="#d88a08"/>
  <path d="M21.8 6.2 L27.5 8.2 V14.8 L25 14.8 L21.8 11.8 Z" fill="#ffd448"/>
  <path d="M29.5 4.2 L32 6.5 V12 L29.5 14.8 L25.5 15" fill="none" stroke="#9a1000" stroke-width="1"/>
  <circle cx="23.3" cy="8.5" r="0.7" fill="#fff8d0"/><circle cx="25.5" cy="12" r="0.6" fill="#fff0b0"/>
  <!-- subform icon -->
  <path d="M19 102 L22.3 104.5 L19 107 Z" fill="#b01010"/>
  <rect x="22.5" y="100.5" width="11" height="8" fill="#ece4cc"/>
  <path d="M22.7 100 V109 H33.5 V98.5" fill="none" stroke="#1434d8" stroke-width="1.1"/>
  <path d="M22.5 100.4 H33.5 M22.5 102.6 H33.5 M28 100 V109" stroke="#1434d8" stroke-width="1"/>
  <rect x="23.3" y="101" width="4.6" height="1.1" fill="#fff"/>
  <rect x="28.5" y="101" width="4.5" height="1.1" fill="#fff"/>
  <path d="M24 104.5 H26.8 M24 106.5 H26.8 M29.3 104.5 H32.5 M29.3 106.5 H32.5" stroke="#202020" stroke-width="1"/>
  <!-- coordinates -->
  <rect x="21.2" y="193.2" width="11.8" height="11.6" fill="#e0e0e0" stroke="#a0a0a0" stroke-width="0.8"/>
  <g fill="#1830c0">
    <rect x="26.3" y="198.2" width="1.6" height="1.6"/>
    <path d="M27.1 193.2 L29 195.6 L25.2 195.6 Z"/><path d="M27.1 204.8 L29 202.4 L25.2 202.4 Z"/>
    <path d="M21.2 199 L23.6 197.1 L23.6 200.9 Z"/><path d="M33 199 L30.6 197.1 L30.6 200.9 Z"/>
    <rect x="26.6" y="195.6" width="1" height="1.2"/><rect x="26.6" y="201.2" width="1" height="1.2"/>
    <rect x="23.6" y="198.5" width="1.2" height="1"/><rect x="29.4" y="198.5" width="1.2" height="1"/>
  </g>
  <!-- resizing -->
  <path d="M24 211.5 H34 M21 214.5 V225" stroke="#c0c0c0" stroke-width="1"/>
  <g fill="#2838f0"><rect x="25" y="216" width="1" height="1"/><rect x="25" y="218" width="1" height="1"/><rect x="25" y="220" width="1" height="1"/><rect x="25" y="222" width="1" height="1"/><rect x="25" y="224" width="1" height="1"/><rect x="27" y="216" width="1" height="1"/><rect x="27" y="224" width="1" height="1"/><rect x="29" y="216" width="1" height="1"/><rect x="29" y="224" width="1" height="1"/><rect x="31" y="216" width="1" height="1"/><rect x="31" y="224" width="1" height="1"/><rect x="33" y="216" width="1" height="1"/><rect x="33" y="218" width="1" height="1"/><rect x="33" y="220" width="1" height="1"/><rect x="33" y="222" width="1" height="1"/><rect x="33" y="224" width="1" height="1"/></g>
  <path d="M27 212.5 H32" stroke="#000" stroke-width="1"/>
  <path d="M31 210.5 L33.5 212.5 L31 214.5 Z" fill="#000"/>
  <rect x="26" y="212" width="1" height="1" fill="#000"/>
  <path d="M21.5 218 V223" stroke="#000" stroke-width="1"/>
  <path d="M19.5 222 L21.5 224.5 L23.5 222 Z" fill="#000"/>
  <!-- entry -->
  <path d="M28.6 238.2 L24.4 233.5 Q23.4 232.3 24.2 231.2 Q25.2 230.3 26.5 231 Q27.4 231.9 26.6 232.9 L23.8 235.5 Q22.8 236.7 23.7 237.7 Q25 238.7 26.7 237.3 L28.9 235.2" fill="none" stroke="#e82020" stroke-width="1"/>
  <path d="M29.8 233 H34.4 M29.6 235.2 H34.2 M31.2 231.3 L30.9 236.8 M33.1 231.3 L32.8 236.8" stroke="#1030e0" stroke-width="1.2"/>
  <rect x="20.5" y="238.5" width="12.5" height="3.6" fill="#fff" stroke="#101010" stroke-width="1"/>
  <rect x="20" y="241.6" width="13.5" height="0.9" fill="#101010"/>
  <rect x="22" y="240" width="3" height="1.1" fill="#20c020"/>
  <rect x="28" y="240" width="3.6" height="1.1" fill="#202020"/>
</svg>
<!-- scrollbar -->
<div class="a" style="left:716px;top:178px;width:17px;height:250px;background:#f0f0f0;border-left:1px solid #e0e0e0"></div>
<div class="a" style="left:717px;top:196px;width:15px;height:147px;border:1px solid #9a9a9a;border-radius:2px;background:linear-gradient(90deg,#f2f2f2,#e8e8e8 50%,#d4d4d4)"></div>
<svg style="left:717px;top:180px" width="15" height="245" viewBox="0 0 15 245">
  <path d="M4 9 L7.5 5.5 L11 9 Z" fill="#202020"/>
  <path d="M5 238 L10 238 L7.5 241 Z" fill="#303030"/>
  <path d="M4 85.5 H11 M4 88.5 H11 M4 91.5 H11" stroke="#404040" stroke-width="1"/><path d="M4 86.5 H11 M4 89.5 H11 M4 92.5 H11" stroke="#fff" stroke-width="1"/>
</svg>
<!-- bottom -->
<div class="a" style="left:417px;top:428px;width:316px;height:1px;background:#707070"></div>
<div class="a" style="left:417px;top:429px;width:316px;height:16px;background:#fff"></div>
<div class="a" style="left:419px;top:431px;font-size:11px;color:#000;white-space:nowrap">All Themes</div>
</body></html>
